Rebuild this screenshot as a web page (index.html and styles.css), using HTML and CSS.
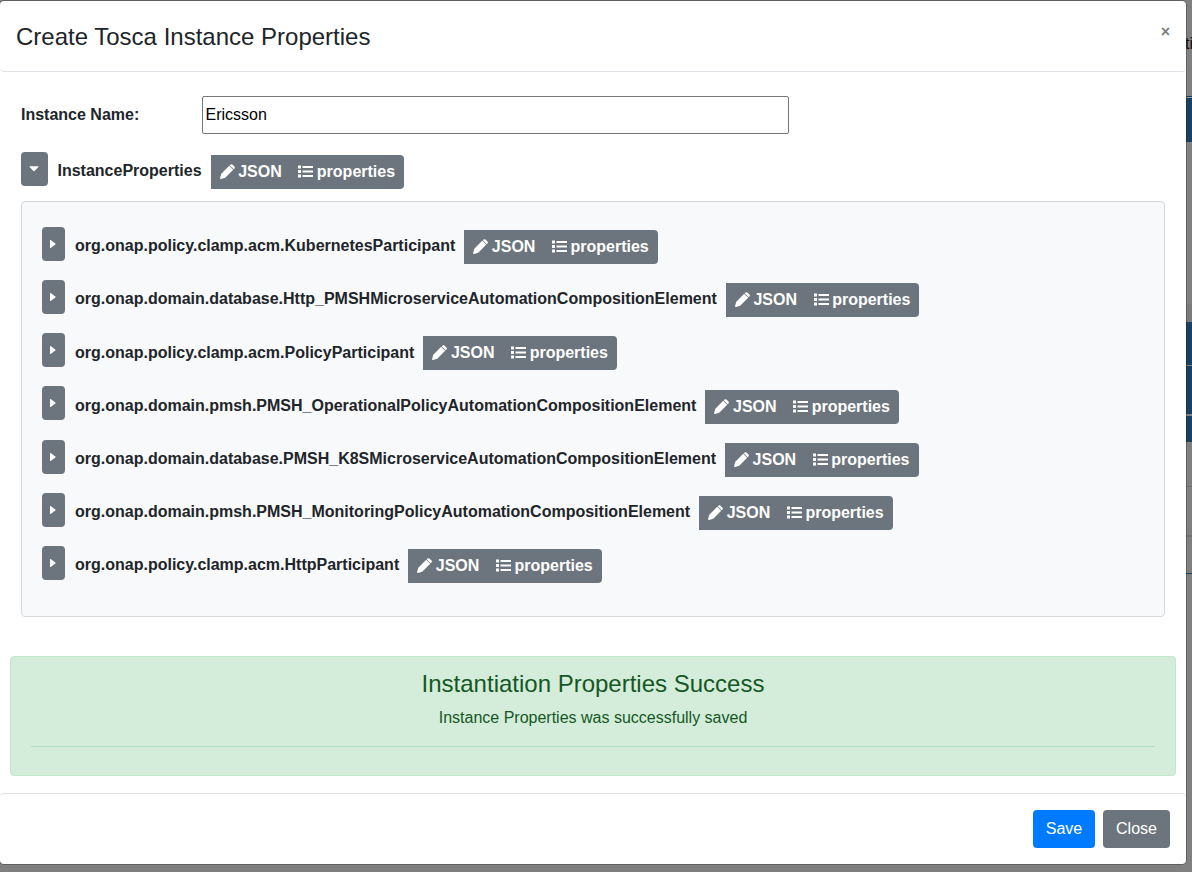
FILE: index.html
```
<!DOCTYPE html>
<html lang="en">
<head>
<meta charset="utf-8">
<title>Create Tosca Instance Properties</title>
<link rel="stylesheet" href="styles.css">
</head>
<body>
<svg class="symbols" aria-hidden="true">
  <symbol id="pencil" viewBox="0 0 15 15"><path d="M9.700 1.300 10.600.5Q11.500-.2 12.400.5L14.500 2.600Q15.200 3.500 14.500 4.400L13.700 5.300zM9.200 1.800 13.200 5.800 5.200 13.700 1 14.900Q0 15.100.1 14L1.300 9.700z"/></symbol>
  <symbol id="list" viewBox="0 0 15 13"><path d="M0 .5h3v3H0zM0 5h3v3H0zM0 9.500h3v3H0zM4.500 1h10.500v2H4.500zM4.500 5.500h10.500v2H4.500zM4.500 10h10.500v2H4.500z"/></symbol>
  <symbol id="right" viewBox="0 0 6 10"><path d="M0 1.500Q0 .6.700 1.100L5.300 4.500Q5.800 5 5.300 5.500L.7 8.900Q0 9.400 0 8.500z"/></symbol>
  <symbol id="down" viewBox="0 0 10 6"><path d="M.8.300h8.400q.7 0 .2.600L5.500 5q-.5.500-1 0L.6.900Q.1.300.8.300z"/></symbol>
</svg>
<div class="page" aria-hidden="true">
  <span class="page-text">ti</span>
  <div class="band band-nav"></div>
  <div class="band band-shade"></div>
  <div class="band band-a"></div>
  <div class="band band-b"></div>
  <div class="band band-c"></div>
  <div class="band line-a"></div>
  <div class="band line-b"></div>
  <div class="band line-c"></div>
</div>
<main class="modal">
  <header class="modal-header">
    <h1 class="modal-title">Create Tosca Instance Properties</h1>
    <span class="close">×</span>
  </header>
  <section class="modal-body">
    <div class="field">
      <label class="field-label" for="name">Instance Name:</label>
      <input class="field-input" id="name" value="Ericsson">
    </div>
    <div class="row root-row">
      <button class="toggle toggle-open"><svg class="caret-down"><use href="#down"/></svg></button>
      <b class="row-title">InstanceProperties</b>
      <div class="actions"><span class="action"><svg class="icon"><use href="#pencil"/></svg>JSON</span><span class="action"><svg class="icon"><use href="#list"/></svg>properties</span></div>
    </div>
    <div class="card">
      <div class="row"><button class="toggle"><svg class="caret"><use href="#right"/></svg></button><b class="row-title">org.onap.policy.clamp.acm.KubernetesParticipant</b><div class="actions"><span class="action"><svg class="icon"><use href="#pencil"/></svg>JSON</span><span class="action"><svg class="icon"><use href="#list"/></svg>properties</span></div></div>
      <div class="row"><button class="toggle"><svg class="caret"><use href="#right"/></svg></button><b class="row-title">org.onap.domain.database.Http_PMSHMicroserviceAutomationCompositionElement</b><div class="actions"><span class="action"><svg class="icon"><use href="#pencil"/></svg>JSON</span><span class="action"><svg class="icon"><use href="#list"/></svg>properties</span></div></div>
      <div class="row"><button class="toggle"><svg class="caret"><use href="#right"/></svg></button><b class="row-title">org.onap.policy.clamp.acm.PolicyParticipant</b><div class="actions"><span class="action"><svg class="icon"><use href="#pencil"/></svg>JSON</span><span class="action"><svg class="icon"><use href="#list"/></svg>properties</span></div></div>
      <div class="row"><button class="toggle"><svg class="caret"><use href="#right"/></svg></button><b class="row-title">org.onap.domain.pmsh.PMSH_OperationalPolicyAutomationCompositionElement</b><div class="actions"><span class="action"><svg class="icon"><use href="#pencil"/></svg>JSON</span><span class="action"><svg class="icon"><use href="#list"/></svg>properties</span></div></div>
      <div class="row"><button class="toggle"><svg class="caret"><use href="#right"/></svg></button><b class="row-title">org.onap.domain.database.PMSH_K8SMicroserviceAutomationCompositionElement</b><div class="actions"><span class="action"><svg class="icon"><use href="#pencil"/></svg>JSON</span><span class="action"><svg class="icon"><use href="#list"/></svg>properties</span></div></div>
      <div class="row"><button class="toggle"><svg class="caret"><use href="#right"/></svg></button><b class="row-title">org.onap.domain.pmsh.PMSH_MonitoringPolicyAutomationCompositionElement</b><div class="actions"><span class="action"><svg class="icon"><use href="#pencil"/></svg>JSON</span><span class="action"><svg class="icon"><use href="#list"/></svg>properties</span></div></div>
      <div class="row"><button class="toggle"><svg class="caret"><use href="#right"/></svg></button><b class="row-title">org.onap.policy.clamp.acm.HttpParticipant</b><div class="actions"><span class="action"><svg class="icon"><use href="#pencil"/></svg>JSON</span><span class="action"><svg class="icon"><use href="#list"/></svg>properties</span></div></div>
    </div>
  </section>
  <section class="alert">
    <h2 class="alert-title">Instantiation Properties Success</h2>
    <p class="alert-text">Instance Properties was successfully saved</p>
    <hr class="alert-line">
  </section>
  <footer class="modal-footer">
    <button class="btn btn-save">Save</button>
    <button class="btn btn-close">Close</button>
  </footer>
</main>
</body>
</html>
```
FILE: styles.css
```
* { box-sizing: border-box; }
body {
  margin: 0;
  height: 872px;
  overflow: hidden;
  padding-top: 1px;
  background: #808080;
  color: #212529;
  font: 16px/24px "Liberation Sans", Arial, sans-serif;
}
button, input { font: inherit; }
.symbols { position: absolute; width: 0; height: 0; }

/* Dimmed page showing past the dialog's right edge */
.page { position: absolute; top: 0; right: 0; width: 6px; height: 872px; overflow: hidden; }
.page-text { position: absolute; top: 32px; left: -1px; color: #111; }
.band { position: absolute; left: 0; width: 6px; background: #1c4060; }
.band-nav { top: 96px; height: 46px; border-top: 1px solid #1c4060; box-shadow: inset 0 1px #999; }
.band-shade { top: 304px; height: 18px; background: #7a7a7a; }
.band-a { top: 322px; height: 43px; }
.band-b { top: 366px; height: 48px; }
.band-c { top: 416px; height: 26px; }
.line-a { top: 486px; height: 1px; background: #6f6f6f; }
.line-b { top: 535px; height: 2px; background: #737373; }
.line-c { top: 573px; height: 1px; }

.modal {
  position: relative;
  width: 1186px;
  height: 863px;
  background: #fff;
  border-radius: 4px;
  box-shadow: 0 0 0 1px rgba(0, 0, 0, .25);
}
.modal-header {
  display: flex;
  justify-content: space-between;
  height: 71px;
  padding: 17px 16px;
  border-bottom: 1px solid #dee2e6;
  border-radius: 4px;
}
.modal-title { margin: 0; font-size: 24px; line-height: 38px; font-weight: 400; }
.close { font-size: 16px; font-weight: 700; line-height: 28px; color: #7f7f7f; }
.modal-body { padding: 24px 21px 0; }
.field { display: flex; align-items: center; height: 38px; }
.field-label { width: 181px; font-weight: 700; }
.field-input {
  width: 587px;
  height: 38px;
  padding: 1px 2.5px;
  border: 1px solid #767676;
  border-radius: 2px;
  color: #000;
  background: #fff;
}
.row { display: flex; height: 34px; margin-bottom: 19.2px; }
.root-row { margin: 18px 0 15px; }
.toggle {
  display: flex;
  align-items: center;
  justify-content: center;
  width: 23px;
  height: 34px;
  padding: 0 1px 0 0;
  border: 0;
  border-radius: 4px;
  background: #6c757d;
}
.toggle-open { width: 27px; }
.caret { width: 6px; height: 10px; fill: #fff; }
.caret-down { width: 10px; height: 6px; fill: #fff; }
.row-title { margin: 7.3px 9px 0 10px; white-space: nowrap; }
.root-row .row-title { margin: 7px 9.5px 0; }
.actions {
  display: flex;
  height: 34px;
  margin-top: 3.1px;
  padding: 0 9px;
  gap: 16.5px;
  border-radius: 0 4px 4px 0;
  background: #6c757d;
  color: #fff;
  font-weight: 700;
}
.root-row .actions { margin-top: 3px; padding: 0 8.5px; }
.action { display: flex; align-items: center; gap: 3.6px; }
.icon { width: 15px; height: 15px; margin-bottom: 1px; fill: #fff; }
.card {
  height: 416px;
  padding: 24.85px 20px 20px;
  border: 1px solid #d6d9dc;
  border-radius: 4px;
  background: #f8f9fa;
}
.alert {
  height: 120px;
  margin: 39px 10px 17px;
  padding: 12px 20px;
  border: 1px solid #c3e6cb;
  border-radius: 4px;
  background: #d4edda;
  color: #155724;
  text-align: center;
}
.alert-title { margin: 0 0 8px; font-size: 24px; line-height: 29px; font-weight: 400; }
.alert-text { margin: 0 0 16px; }
.alert-line { margin: 0; border: 0; border-top: 1px solid #b1dfbb; }
.modal-footer {
  display: flex;
  justify-content: flex-end;
  gap: 8px;
  height: 71px;
  padding: 16px;
  border-top: 1px solid #dee2e6;
  border-radius: 4px;
}
.btn { height: 38px; padding: 0; border: 0; border-radius: 4px; color: #fff; }
.btn-save { width: 62px; background: #007bff; }
.btn-close { width: 67px; background: #6c757d; }
```
